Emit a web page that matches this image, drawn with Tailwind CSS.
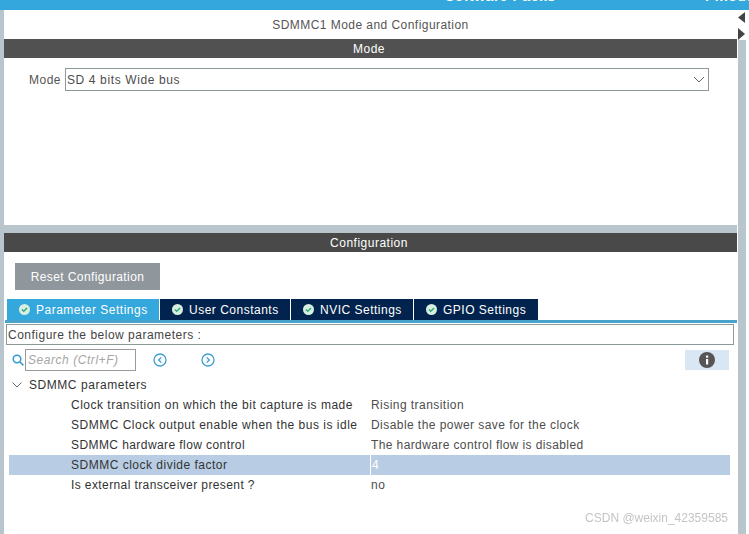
<!DOCTYPE html>
<html lang="en">
<head>
  <meta charset="UTF-8">
  <title>SDMMC1 Mode and Configuration</title>
  <script src="https://cdn.jsdelivr.net/npm/@tailwindcss/browser@4"></script>
</head>
<body class="bg-white font-['Liberation_Sans',Arial,sans-serif] text-[12px] tracking-[0.5px] text-[#4d4d4d]">
  <div class="w-[749px] h-[534px] overflow-hidden flex flex-col">
    <!-- top bar, labels cut off by the crop -->
    <header class="h-[10px] shrink-0 bg-[#34a7dc] overflow-hidden flex items-end text-white font-bold text-[14px] leading-[16px] whitespace-nowrap">
      <span class="ml-[445px] mb-[6px] w-[113px] shrink-0">Software Packs</span>
      <span class="ml-[147px] mb-[6px] shrink-0">Pinout</span>
    </header>

    <div class="flex flex-1 min-h-0">
      <div class="w-[4px] shrink-0 bg-[#b9c5cc]"></div>

      <main class="w-[733px] shrink-0 flex flex-col bg-[#b9c5cc]">
        <!-- mode panel -->
        <section class="h-[215px] shrink-0 bg-white">
          <h2 class="h-[29px] flex items-center justify-center text-[12px] tracking-[0.45px] text-[#555]">SDMMC1 Mode and Configuration</h2>
          <div class="h-[19px] pr-[3px] bg-[#505150] text-white flex items-center justify-center">Mode</div>
          <div class="mt-[10px] flex items-center h-[23px]">
            <label class="ml-[25px] w-[36px] text-[#555]">Mode</label>
            <div class="w-[644px] h-[23px] border border-[#8d9899] flex items-center justify-between pl-[1px] pr-[3px] tracking-[0.62px] text-[#4d4d4d]">
              <span>SD 4 bits Wide bus</span>
              <svg width="12" height="7" viewBox="0 0 12 7" fill="none" stroke="#666" stroke-width="1"><path d="M1 1l5 5 5-5"/></svg>
            </div>
          </div>
        </section>

        <!-- configuration panel -->
        <section class="mt-[8px] flex-1 bg-white">
          <div class="h-[19px] pr-[3px] bg-[#484948] text-white flex items-center justify-center">Configuration</div>
          <button class="mt-[11px] ml-[11px] w-[145px] h-[27px] bg-[#8f969c] text-white text-center tracking-[0.4px]">Reset Configuration</button>

          <nav class="mt-[9px] ml-[3px] flex h-[21px] text-white">
            <div class="w-[152px] bg-[#34a7dc] flex items-center pl-[12px] gap-[6px]">
              <svg width="11" height="11" viewBox="0 0 12 12"><circle cx="6" cy="6" r="6" fill="#d6efe0"/><path d="M3.2 6l2 2 3.6-3.6" fill="none" stroke="#34a77c" stroke-width="1.6"/></svg>
              <span>Parameter Settings</span>
            </div>
            <div class="ml-[1px] w-[130px] bg-[#02234d] flex items-center pl-[12px] gap-[6px]">
              <svg width="11" height="11" viewBox="0 0 12 12"><circle cx="6" cy="6" r="6" fill="#d6efe0"/><path d="M3.2 6l2 2 3.6-3.6" fill="none" stroke="#34a77c" stroke-width="1.6"/></svg>
              <span>User Constants</span>
            </div>
            <div class="ml-[1px] w-[122px] bg-[#02234d] flex items-center pl-[12px] gap-[6px]">
              <svg width="11" height="11" viewBox="0 0 12 12"><circle cx="6" cy="6" r="6" fill="#d6efe0"/><path d="M3.2 6l2 2 3.6-3.6" fill="none" stroke="#34a77c" stroke-width="1.6"/></svg>
              <span>NVIC Settings</span>
            </div>
            <div class="ml-[1px] w-[124px] bg-[#02234d] flex items-center pl-[12px] gap-[6px]">
              <svg width="11" height="11" viewBox="0 0 12 12"><circle cx="6" cy="6" r="6" fill="#d6efe0"/><path d="M3.2 6l2 2 3.6-3.6" fill="none" stroke="#34a77c" stroke-width="1.6"/></svg>
              <span>GPIO Settings</span>
            </div>
          </nav>
          <div class="h-[3px] ml-[1px] bg-[#48a3cd]"></div>

          <div class="mt-[1px] ml-[2px] w-[728px] h-[21px] border border-[#8d9899] flex items-center pl-[1px] text-[#444]">Configure the below parameters :</div>

          <div class="mt-[4px] h-[22px] flex items-center">
            <svg class="ml-[8px]" width="12" height="12" viewBox="0 0 12 12" fill="none" stroke="#2f9bd0" stroke-width="1.5"><circle cx="5" cy="5" r="3.8"/><path d="M8 8l3.4 3.4"/></svg>
            <div class="ml-[1px] w-[111px] h-[22px] border border-[#9a9a9a] flex items-center pl-[2px] italic tracking-[0.55px] text-[#a5a5a5]">Search (Ctrl+F)</div>
            <svg class="ml-[17px]" width="14" height="14" viewBox="0 0 14 14" fill="none" stroke="#3d9fd0" stroke-width="1.3"><circle cx="7" cy="7" r="6"/><path d="M8.2 4.500L5.700 7l2.500 2.500"/></svg>
            <svg class="ml-[34px]" width="14" height="14" viewBox="0 0 14 14" fill="none" stroke="#3d9fd0" stroke-width="1.3"><circle cx="7" cy="7" r="6"/><path d="M5.800 4.500L8.300 7l-2.500 2.500"/></svg>
            <div class="ml-[470px] w-[44px] h-[20px] bg-[#d9e7f4] flex items-center justify-center">
              <svg width="16" height="16" viewBox="0 0 16 16"><circle cx="8" cy="8" r="8" fill="#555"/><rect x="7" y="7" width="2.200" height="5.500" fill="#fff"/><rect x="7" y="3.500" width="2.200" height="2.200" fill="#fff"/></svg>
            </div>
          </div>

          <div class="mt-[4px] h-[20px] flex items-center text-[#333]">
            <svg class="ml-[8px]" width="10" height="6" viewBox="0 0 10 6" fill="none" stroke="#666"><path d="M.5.500L5 5 9.500.500"/></svg>
            <span class="ml-[7px] tracking-[0.55px]">SDMMC parameters</span>
          </div>

          <div class="ml-[5px] w-[721px]">
            <div class="h-[20px] flex items-center"><span class="ml-[62px] w-[300px] shrink-0 text-[#333]">Clock transition on which the bit capture is made</span><span class="tracking-[0.45px]">Rising transition</span></div>
            <div class="h-[20px] flex items-center"><span class="ml-[62px] w-[300px] shrink-0 text-[#333]">SDMMC Clock output enable when the bus is idle</span><span class="tracking-[0.44px]">Disable the power save for the clock</span></div>
            <div class="h-[20px] flex items-center"><span class="ml-[62px] w-[300px] shrink-0 tracking-[0.42px] text-[#333]">SDMMC hardware flow control</span><span class="tracking-[0.39px]">The hardware control flow is disabled</span></div>
            <div class="h-[20px] flex items-center bg-[#b8cde3]"><span class="ml-[62px] w-[299px] shrink-0 text-[#333]">SDMMC clock divide factor</span><span class="h-full border-l border-white pl-[1px] flex items-center text-white">4</span></div>
            <div class="h-[20px] flex items-center"><span class="ml-[62px] w-[300px] shrink-0 tracking-[0.4px] text-[#333]">Is external transceiver present ?</span><span>no</span></div>
          </div>
        </section>
      </main>

      <!-- right splitter -->
      <aside class="w-[8px] ml-[1px] shrink-0 flex flex-col">
        <div class="h-[30px] bg-white flex flex-col gap-[5px] pt-[2px]">
          <svg width="8" height="11" viewBox="0 0 8 11"><path d="M7 0v11L0 5.500z" fill="#444"/></svg>
          <svg width="8" height="12" viewBox="0 0 8 12"><path d="M0 0v12l7-6z" fill="#444"/></svg>
        </div>
        <div class="flex-1 bg-[#b9c5cc]"></div>
      </aside>
    </div>
  </div>
  <div class="fixed right-[21px] bottom-[7px] text-[12px] tracking-normal text-[#c4c4c4]">CSDN @weixin_42359585</div>
</body>
</html>
